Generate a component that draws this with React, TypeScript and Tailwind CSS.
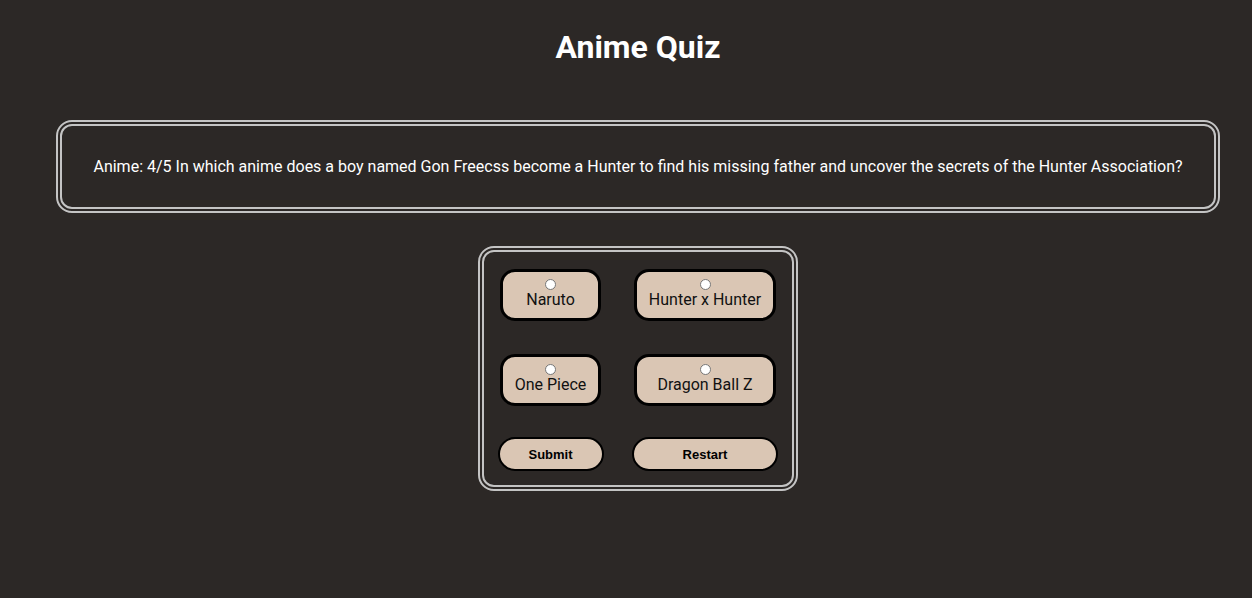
const options = ["Naruto", "Hunter x Hunter", "One Piece", "Dragon Ball Z"];

function OptionButton({ label }: { label: string }) {
  return (
    <label className="flex flex-col items-center justify-start pt-[7px] h-[52px] px-[6px] rounded-[15px] border-[3px] border-black bg-[#dac6b4] text-[#111] text-[16px] leading-[19px] whitespace-nowrap cursor-pointer">
      <input type="radio" name="answer" className="shrink-0 w-[11px] h-[11px] m-0 appearance-none rounded-full bg-white border border-[#777]" />
      <span>{label}</span>
    </label>
  );
}

export default function App() {
  return (
    <div className="min-h-[598px] bg-[#2c2826] pl-[24px] font-['Roboto',sans-serif] text-white">
      <h1 className="pt-[29px] text-center text-[32px] leading-[36px] font-bold">Anime Quiz</h1>

      <div className="mt-[55px] mx-[32px] h-[93px] flex items-center justify-center rounded-[16px] border-[6px] border-double border-[#c4c4c4]">
        <p className="text-[16px] leading-[20px] text-center">
          Anime: 4/5 In which anime does a boy named Gon Freecss become a Hunter to find his missing father and uncover the secrets of the Hunter Association?
        </p>
      </div>

      <div className="mt-[33px] flex justify-center">
        <div className="grid grid-cols-[101px_142px] gap-x-[33px] gap-y-[33px] rounded-[16px] border-[6px] border-double border-[#c4c4c4] pt-[17px] pb-[14px] px-[16px]">
          {options.map((o) => (
            <OptionButton key={o} label={o} />
          ))}
          <button className="-mt-[2px] justify-self-center w-[106px] h-[34px] rounded-full border-[2px] border-black bg-[#dac6b4] text-black text-[13px] leading-[32px] font-bold font-['Liberation_Sans',Arial,sans-serif]">
            Submit
          </button>
          <button className="-mt-[2px] justify-self-center w-[146px] h-[34px] rounded-full border-[2px] border-black bg-[#dac6b4] text-black text-[13px] leading-[32px] font-bold font-['Liberation_Sans',Arial,sans-serif]">
            Restart
          </button>
        </div>
      </div>
    </div>
  );
}
